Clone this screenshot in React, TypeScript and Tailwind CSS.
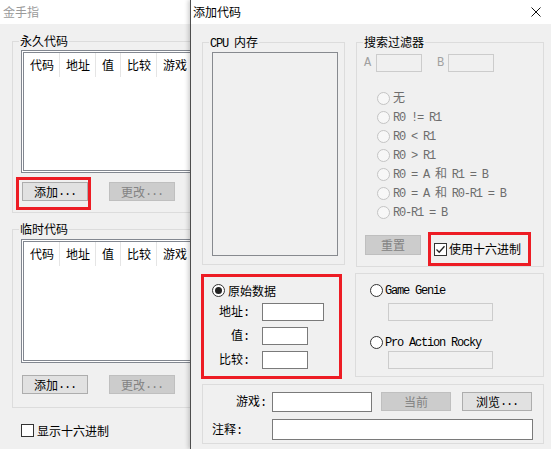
import type { ReactNode } from "react";

const mono = "font-['Liberation_Mono','Noto_Sans_CJK_SC',monospace] tracking-[-1.2px]";

function Legend({ children }: { children: ReactNode }) {
  return <div className="-mt-[7px] ml-[6px] w-fit bg-[#f0f0f0] px-[1px] leading-[12px]">{children}</div>;
}

function Dots() {
  return <span className={mono}>...</span>;
}

function Colon() {
  return <span className={`${mono} pr-[1px]`}>:</span>;
}

function Btn({ children, className = "", disabled }: { children: ReactNode; className?: string; disabled?: boolean }) {
  return (
    <button
      type="button"
      className={`flex shrink-0 items-center justify-center border leading-[12px] ${
        disabled ? "border-[#bfbfbf] bg-[#cccccc] text-[#838383]" : "border-[#adadad] bg-[#e1e1e1] text-black"
      } ${className}`}
    >
      {children}
    </button>
  );
}

function Field({ className = "", disabled }: { className?: string; disabled?: boolean }) {
  return (
    <div
      className={`shrink-0 border ${disabled ? "border-[#cccccc] bg-[#f0f0f0]" : "border-[#7a7a7a] bg-white"} ${className}`}
    />
  );
}

function Radio({ checked, disabled }: { checked?: boolean; disabled?: boolean }) {
  return (
    <span
      className={`flex h-[13px] w-[13px] shrink-0 items-center justify-center rounded-full border ${
        disabled ? "border-[#c4c4c4] bg-[#f7f7f7]" : "border-[#333333] bg-white"
      }`}
    >
      {checked && <span className="h-[7px] w-[7px] rounded-full bg-[#222222]" />}
    </span>
  );
}

function Check({ checked }: { checked?: boolean }) {
  return (
    <span className="flex h-[13px] w-[13px] shrink-0 items-center justify-center border border-[#333333] bg-white">
      {checked && (
        <svg width="11" height="11" viewBox="0 0 11 11">
          <path d="M1.5 5.5 L4.2 8.2 L9.5 2.2" fill="none" stroke="#222" strokeWidth="1.3" />
        </svg>
      )}
    </span>
  );
}

function CodeList({ className = "" }: { className?: string }) {
  const cols = [
    { label: "代码", w: "w-[36px]" },
    { label: "地址", w: "w-[36px]" },
    { label: "值", w: "w-[25px]" },
    { label: "比较", w: "w-[36px]" },
    { label: "游戏", w: "w-[40px]" },
  ];
  return (
    <div className={`ml-[8px] w-[240px] border-[3px] border-double border-[#828790] bg-white ${className}`}>
      <div className="flex h-[24px]">
        {cols.map((c) => (
          <div key={c.label} className={`flex h-full items-center border-r border-[#e5e5e5] pl-[6px] ${c.w}`}>
            {c.label}
          </div>
        ))}
      </div>
    </div>
  );
}

const filters = ["无", "R0 != R1", "R0 < R1", "R0 > R1", "R0 = A 和 R1 = B", "R0 = A 和 R0-R1 = B", "R0-R1 = B"];

export default function App() {
  return (
    <div className="relative h-[449px] w-[551px] overflow-hidden bg-[#f0f0f0] font-['Noto_Sans_CJK_SC',sans-serif] text-[12px] leading-[12px] text-black">
      {/* back window: 金手指 */}
      <div className="absolute left-0 top-0 h-[449px] w-[260px] bg-[#f0f0f0]">
        <div className="flex h-[24px] items-center bg-white pl-[3px] text-[#9a9a9a]">金手指</div>

        <div className="ml-[12px] mt-[17px] h-[172px] border border-[#dcdcdc]">
          <Legend>永久代码</Legend>
          <CodeList className="mt-[3px] h-[123px]" />
          <div className="ml-[9px] mt-[9px] flex gap-[21px]">
            <Btn className="h-[19px] w-[66px]">
              添加
              <Dots />
            </Btn>
            <Btn disabled className="h-[19px] w-[66px]">
              更改
              <Dots />
            </Btn>
          </div>
        </div>

        <div className="ml-[12px] mt-[16px] h-[179px] border border-[#dcdcdc]">
          <Legend>临时代码</Legend>
          <CodeList className="mt-[4px] h-[124px]" />
          <div className="ml-[9px] mt-[12px] flex gap-[21px]">
            <Btn className="h-[19px] w-[66px]">
              添加
              <Dots />
            </Btn>
            <Btn disabled className="h-[19px] w-[66px]">
              更改
              <Dots />
            </Btn>
          </div>
        </div>

        <div className="ml-[21px] mt-[16px] flex items-center gap-[3px]">
          <Check />
          <span>显示十六进制</span>
        </div>
      </div>

      {/* annotation around 添加 */}
      <div className="absolute left-[16px] top-[177px] h-[33px] w-[75px] border-[3px] border-[#ed1c24]" />

      {/* front dialog: 添加代码 */}
      <div className="absolute left-[190px] top-0 h-[449px] w-[361px] border-l border-[#4d4d4d] bg-[#f0f0f0] shadow-[-2px_0_4px_rgba(0,0,0,0.18)]">
        <div className="flex h-[24px] items-center justify-between bg-white pl-[2px] pr-[10px]">
          <span>添加代码</span>
          <svg width="10" height="10" viewBox="0 0 10 10">
            <path d="M0.5 0.5 L9.5 9.5 M9.5 0.5 L0.5 9.5" stroke="#111" strokeWidth="1" />
          </svg>
        </div>

        <div className="pl-[11px]">
          <div className="mt-[18px] flex items-start gap-[11px]">
            <div className="h-[223px] w-[143px] border border-[#dcdcdc]">
              <Legend>
                <span className={mono}>CPU </span>内存
              </Legend>
              <div className="ml-[9px] mt-[2px] h-[204px] w-[126px] border border-[#878a8f]" />
            </div>

            <div className="h-[225px] w-[188px] border border-[#dcdcdc]">
              <Legend>搜索过滤器</Legend>
              <div className="mt-[6px] flex h-[18px] items-center">
                <span className={`ml-[7px] w-[12px] text-[#a0a0a0] ${mono}`}>A</span>
                <Field disabled className="h-[18px] w-[46px]" />
                <span className={`ml-[15px] w-[11px] text-[#a0a0a0] ${mono}`}>B</span>
                <Field disabled className="h-[18px] w-[46px]" />
              </div>
              <div className="mt-[17px]">
                {filters.map((f) => (
                  <div key={f} className="ml-[20px] flex h-[19px] items-center gap-[3px] text-[#6d6d6d]">
                    <Radio disabled />
                    <span className={mono}>{f}</span>
                  </div>
                ))}
              </div>
              <div className="mt-[10px] flex items-start">
                <Btn disabled className="ml-[8px] mt-[3px] h-[20px] w-[56px]">
                  重置
                </Btn>
                <div className="ml-[7px] flex h-[34px] w-[103px] items-center gap-[2px] border-[3px] border-[#ed1c24] pl-[3px]">
                  <Check checked />
                  <span>使用十六进制</span>
                </div>
              </div>
            </div>
          </div>

          <div className="mt-[6px] flex items-start">
            <div className="-ml-[1px] mt-[1px] h-[105px] w-[141px] border-[3px] border-[#ed1c24]">
              <div className="ml-[8px] mt-[7px] flex h-[13px] items-center gap-[3px]">
                <Radio checked />
                <span>原始数据</span>
              </div>
              <div className="mt-[6px] flex h-[18px] items-center">
                <span className="w-[46px] text-right">
                  地址
                  <Colon />
                </span>
                <Field className="ml-[12px] h-[18px] w-[62px]" />
              </div>
              <div className="mt-[6px] flex h-[18px] items-center">
                <span className="w-[46px] text-right">
                  值
                  <Colon />
                </span>
                <Field className="ml-[12px] h-[18px] w-[46px]" />
              </div>
              <div className="mt-[6px] flex h-[18px] items-center">
                <span className="w-[46px] text-right">
                  比较
                  <Colon />
                </span>
                <Field className="ml-[12px] h-[18px] w-[46px]" />
              </div>
            </div>

            <div className="ml-[13px] h-[104px] w-[189px] border border-[#dcdcdc]">
              <div className="ml-[14px] mt-[10px] flex h-[13px] items-center gap-[2px]">
                <Radio />
                <span className={mono}>Game Genie</span>
              </div>
              <Field disabled className="ml-[32px] mt-[6px] h-[18px] w-[105px]" />
              <div className="ml-[14px] mt-[15px] flex h-[13px] items-center gap-[2px]">
                <Radio />
                <span className={mono}>Pro Action Rocky</span>
              </div>
              <Field disabled className="ml-[32px] mt-[2px] h-[18px] w-[105px]" />
            </div>
          </div>

          <div className="mt-[5px] h-[60px] w-[342px] border border-[#dcdcdc]">
            <div className="mt-[6px] flex h-[21px] items-center">
              <span className="w-[64px] text-right">
                游戏
                <Colon />
              </span>
              <Field className="ml-[5px] h-[20px] w-[100px]" />
              <Btn disabled className="ml-[9px] h-[19px] w-[70px]">
                当前
              </Btn>
              <Btn className="ml-[11px] h-[19px] w-[70px]">
                浏览
                <Dots />
              </Btn>
            </div>
            <div className="mt-[7px] flex h-[21px] items-center">
              <span className="w-[64px] pl-[9px]">
                注释
                <Colon />
              </span>
              <Field className="ml-[5px] h-[21px] w-[261px]" />
            </div>
          </div>
        </div>
      </div>
    </div>
  );
}
